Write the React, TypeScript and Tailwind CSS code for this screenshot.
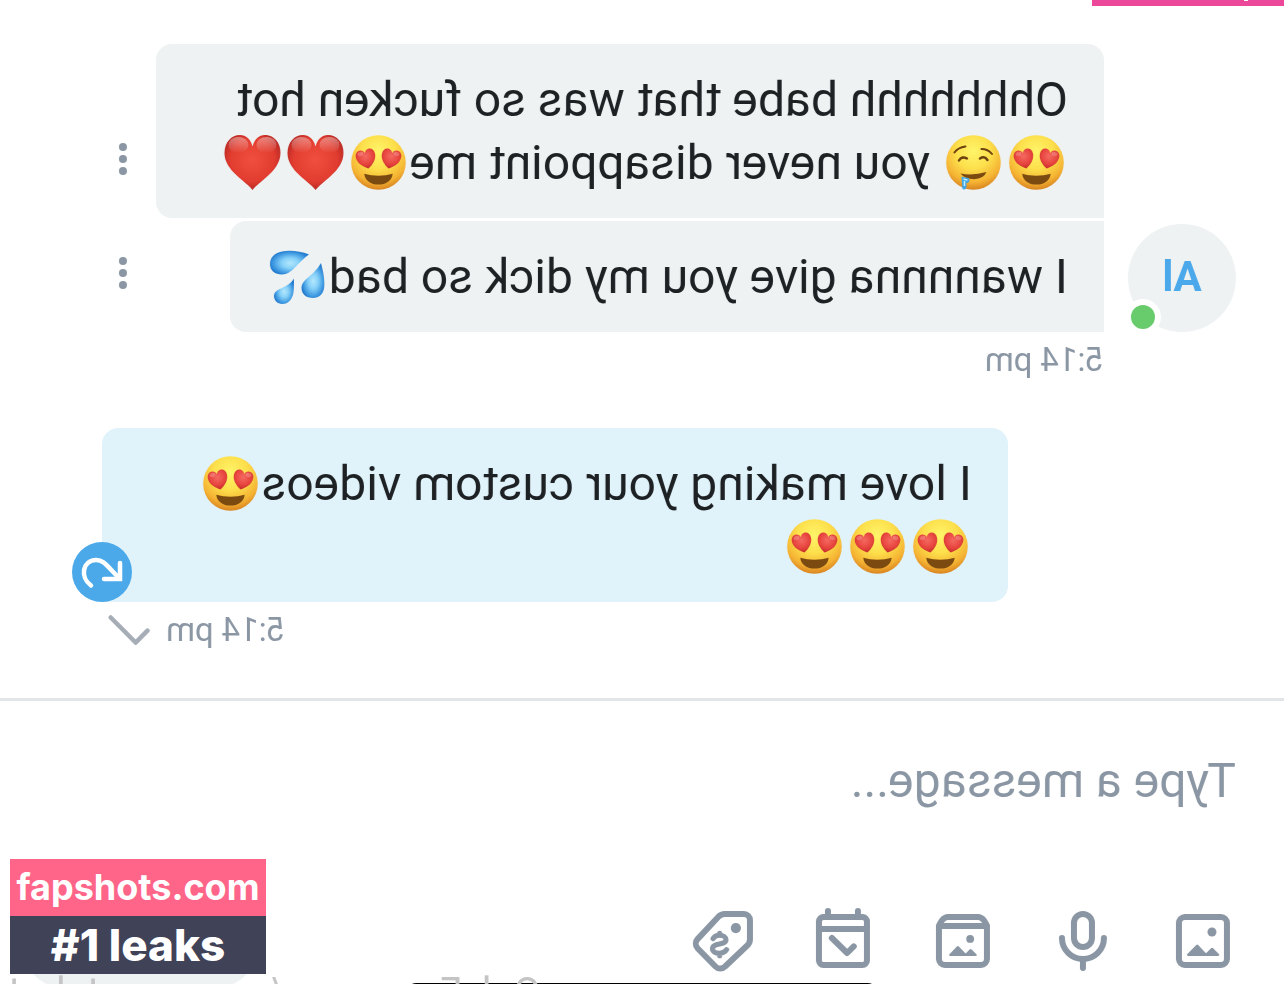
import type { ReactNode } from "react";

const HEART =
  "M0 10C-5 7-9.800 2.500-9.800-3.300C-9.800-7.600-7.200-9.400-4.800-9.400C-2.200-9.400-.6-7.800 0-5.800C.6-7.800 2.200-9.400 4.800-9.400C7.200-9.400 9.800-7.600 9.800-3.300C9.800 2.500 5 7 0 10Z";

/* Gradients shared by all the emoji drawings. */
function EmojiDefs() {
  return (
    <svg className="absolute size-0" aria-hidden="true">
      <defs>
        <radialGradient id="face" cx="0.5" cy="0.3" r="0.7">
          <stop offset="0" stopColor="#fff56a" />
          <stop offset="0.45" stopColor="#fde04c" />
          <stop offset="0.8" stopColor="#f5b333" />
          <stop offset="1" stopColor="#d98420" />
        </radialGradient>
        <radialGradient id="heart" cx="0.5" cy="0.45" r="0.6">
          <stop offset="0" stopColor="#f0503f" />
          <stop offset="0.65" stopColor="#e23d30" />
          <stop offset="1" stopColor="#ae2420" />
        </radialGradient>
        <radialGradient id="eye" cx="0.5" cy="0.35" r="0.65">
          <stop offset="0" stopColor="#f46a62" />
          <stop offset="0.6" stopColor="#e8463f" />
          <stop offset="1" stopColor="#c42c2a" />
        </radialGradient>
        <linearGradient id="gloss" x1="0" y1="0" x2="0" y2="1">
          <stop offset="0" stopColor="#fff" stopOpacity="0.4" />
          <stop offset="1" stopColor="#fff" stopOpacity="0" />
        </linearGradient>
        <radialGradient id="drop" cx="0.52" cy="0.52" r="0.55">
          <stop offset="0" stopColor="#b4e8fd" />
          <stop offset="0.4" stopColor="#86d0f8" />
          <stop offset="0.75" stopColor="#459fe4" />
          <stop offset="1" stopColor="#2178cc" />
        </radialGradient>
      </defs>
    </svg>
  );
}

function Emoji({ label, children }: { label: string; children: ReactNode }) {
  return (
    <svg
      role="img"
      aria-label={label}
      viewBox="-4 0 63 55"
      className="inline-block h-[55px] w-[63px] align-[-11px]"
    >
      {children}
    </svg>
  );
}

function HeartEyes() {
  return (
    <Emoji label="Smiling face with heart eyes">
      <circle cx="27.5" cy="27.5" r="27.3" fill="url(#face)" />
      <g transform="translate(15.2 23.8) rotate(-13)">
        <path d={HEART} fill="url(#eye)" />
        <ellipse cx="-4.500" cy="-6" rx="3" ry="2" fill="#fff" opacity="0.2" />
      </g>
      <g transform="translate(39.8 23.8) rotate(13)">
        <path d={HEART} fill="url(#eye)" />
        <ellipse cx="4.500" cy="-6" rx="3" ry="2" fill="#fff" opacity="0.2" />
      </g>
      <path d="M13.300 38.800c8.500 2.600 20 2.600 28.400 0c-.7 7.200-6.700 10.800-14.200 10.800S14 46 13.300 38.800Z" fill="#7a4a10" />
    </Emoji>
  );
}

function Drooling() {
  return (
    <Emoji label="Drooling face">
      <circle cx="27.5" cy="27.5" r="27.3" fill="url(#face)" />
      <g transform="translate(55 0) scale(-1 1)">
        <g fill="none" stroke="#6e400f" strokeWidth="2" strokeLinecap="round">
          <path d="M8.500 17.500Q12 12.500 19.500 11.500" />
          <path d="M35.500 14Q42 14 46 19" />
          <path d="M13 25.500Q16 20.500 21 23.500" strokeWidth="2.400" />
          <path d="M34 23.500Q38.500 20.500 41.500 25" strokeWidth="2.400" />
        </g>
        <path d="M14.500 38.500Q27 41 40.500 37Q38 43.800 28 44.200Q19 44 14.500 38.500Z" fill="#7a4a10" />
        <path d="M15.500 41.500C19 43 23 42 23.500 44.500C23.800 47.500 21.500 48.500 20.500 47.500V52C20.500 55 16.300 55.500 16.300 52.500Z" fill="#3ea6e8" />
        <path d="M17.500 44Q20 45 21.500 45M18.500 46V51" fill="none" stroke="#c5efff" strokeWidth="1.500" />
      </g>
    </Emoji>
  );
}

function RedHeart() {
  return (
    <Emoji label="Red heart">
      <path
        d="M27.500 55C21.500 46.500-.5 36-.5 18C-.5 7 6.500 0 15 0C21 0 25.500 4 27.500 11.500C29.500 4 34 0 40 0C48.500 0 55.500 7 55.500 18C55.500 36 33.500 46.500 27.500 55Z"
        fill="url(#heart)"
      />
      <ellipse cx="13.500" cy="10" rx="10" ry="8" fill="url(#gloss)" />
      <ellipse cx="41.500" cy="10" rx="10" ry="8" fill="url(#gloss)" />
    </Emoji>
  );
}

function SweatDrops() {
  return (
    <Emoji label="Sweat droplets">
      <g transform="translate(55 0) scale(-1 1)" fill="url(#drop)">
        <path d="M39 5.500C30 2 20 1 12 2.500C4 4 0 9 0 15C0 21.500 5 25.500 12 25.500C22 25.500 28 13 39 5.500Z" />
        <path d="M51 14C53 22 54.500 28 54.300 37C54 45 49 49 43 49C36 49 31.500 45 31.500 38.500C31.500 30 44 27 51 14Z" />
        <path d="M24 29.500C24 37 24 42 23 46C21 52 17 55 12.500 55C7 55 4 51 4 46.500C4 39 18 40 24 29.500Z" />
      </g>
    </Emoji>
  );
}

function MoreButton() {
  return (
    <button type="button" aria-label="Message options" className="mb-[27px] flex h-16 w-[66px] shrink-0 items-center justify-center text-[#8a96a3]">
      <svg viewBox="0 0 8 32" className="h-8 w-2" fill="currentColor" aria-hidden="true">
        <circle cx="4" cy="4" r="4" />
        <circle cx="4" cy="16" r="4" />
        <circle cx="4" cy="28" r="4" />
      </svg>
    </button>
  );
}

function ToolButton({ label, children }: { label: string; children: ReactNode }) {
  return (
    <button type="button" aria-label={label} className="size-[72px] shrink-0 text-[#8a96a3]">
      <svg
        viewBox="0 0 24 24"
        className="size-[72px]"
        fill="none"
        stroke="currentColor"
        strokeWidth="2"
        strokeLinecap="round"
        strokeLinejoin="round"
        aria-hidden="true"
      >
        {children}
      </svg>
    </button>
  );
}

function Toolbar() {
  return (
    <div className="flex items-center gap-12">
      <ToolButton label="Add photo">
        <rect x="4" y="4" width="16" height="16" rx="2" />
        <circle cx="9" cy="9" r="1.500" fill="currentColor" stroke="none" />
        <path d="M7 17a.4.4 0 0 1-.3-.7l1.900-1.900a.5.5 0 0 1 .7 0l1.700 1.700 2.500-2.700a.5.5 0 0 1 .8 0l2.900 2.900a.4.4 0 0 1-.3.700Z" fill="currentColor" stroke="none" />
      </ToolButton>
      <ToolButton label="Record voice">
        <rect x="9" y="3" width="6" height="11" rx="3" />
        <path d="M5 11a7 7 0 0 0 14 0M12 18v3" />
      </ToolButton>
      <ToolButton label="Add from vault">
        <path d="M4 7v11a2 2 0 0 0 2 2h12a2 2 0 0 0 2-2V7Z" />
        <path d="M4 7.500C4 6 5.500 4 7 4h10c1.500 0 3 2 3 3.500" />
        <circle cx="9.600" cy="11.300" r="1.300" fill="currentColor" stroke="none" />
        <path d="M7.700 17a.35.35 0 0 1-.2-.6l1.600-1.600a.5.5 0 0 1 .7 0l1.300 1.400 2.200-2.300a.5.5 0 0 1 .8 0l2.400 2.500a.35.35 0 0 1-.2.600Z" fill="currentColor" stroke="none" />
      </ToolButton>
      <ToolButton label="Schedule message">
        <rect x="4" y="4" width="16" height="16" rx="1.500" />
        <path d="M7 4V2M17 4V2M8.400 13.800l2.200 2.200 5.100-5" />
        <path d="M4 8h16" />
      </ToolButton>
      <ToolButton label="Set price">
        <path d="M5 3h6.400a3 3 0 0 1 2.100.9l6.900 7.400a2.300 2.300 0 0 1 0 3.200l-5.900 6a2.200 2.200 0 0 1-3.200 0L3.900 13.500A3 3 0 0 1 3 11.400V5a2 2 0 0 1 2-2Z" />
        <circle cx="7.700" cy="7.700" r="1.700" fill="currentColor" stroke="none" />
        <path
          d="M15.300 11.200c-.5-.8-1.300-1.100-2.200-1.100-1.200 0-2.100.6-2.100 1.500 0 2 4.500.8 4.500 3 0 .9-1 1.500-2.300 1.500-1 0-1.900-.4-2.400-1.200M13.100 9.400v.6M13.100 16.200v.7"
          strokeWidth="1.700"
        />
      </ToolButton>
    </div>
  );
}

export default function App() {
  return (
    <div className="relative flex h-dvh flex-col overflow-hidden bg-white font-['Roboto',sans-serif]">
      <EmojiDefs />

      <main className="relative flex min-h-0 flex-1 -scale-x-100 flex-col pt-11 text-[48px] leading-[63px] text-[#1d2124]">
        <section aria-label="Conversation" className="flex flex-col">
          <div className="flex items-end gap-6 pr-[90px] pl-12">
            <div className="relative flex size-[108px] shrink-0 items-center justify-center rounded-full bg-[#eef2f3] pb-1 text-[42px] font-bold text-[#4ba8ea]">
              Al
              <span className="absolute -right-[3px] -bottom-[3px] size-9 rounded-full border-6 border-white bg-[#68cb6c]" />
            </div>
            <div className="flex min-w-0 flex-1 flex-col gap-[3px]">
              <div className="flex items-end justify-between">
                <p className="w-full max-w-[948px] rounded-t-2xl rounded-br-2xl bg-[#eef2f3] px-9 py-6">
                  Ohhhhhhh babe that was so fucken hot
                  <HeartEyes />
                  <Drooling /> you never disappoint me
                  <HeartEyes />
                  <RedHeart />
                  <RedHeart />
                </p>
                <MoreButton />
              </div>
              <div className="flex items-end justify-between">
                <p className="rounded-r-2xl bg-[#eef2f3] px-9 py-6">
                  I wannnna give you my dick so bad
                  <SweatDrops />
                </p>
                <MoreButton />
              </div>
            </div>
          </div>
          <time className="mt-[10px] ml-[180px] text-[33px] leading-9 text-[#8a96a3]">5:14 pm</time>

          <div className="mt-[50px] flex justify-end pr-[102px]">
            <div className="relative w-full max-w-[906px] rounded-t-2xl rounded-bl-2xl bg-[#e1f3fa] px-9 py-6">
              <p>
                I love making your custom videos
                <HeartEyes />
                <br />
                <HeartEyes />
                <HeartEyes />
                <HeartEyes />
              </p>
              <button type="button" aria-label="Resend" className="absolute -right-[30px] bottom-0 size-[60px] rounded-full bg-[#4ba9ea]">
                <svg viewBox="0 0 60 60" className="size-[60px]" fill="none" stroke="#fff" strokeWidth="4.500" strokeLinecap="round" aria-hidden="true">
                  <g transform="translate(60 0) scale(-1 1)">
                    <path d="M19 43.500C7.500 35 10.500 18.500 24 18C31.500 17.800 34.500 23.500 47.500 36.500" />
                    <path d="M48 21V37H32" />
                  </g>
                </svg>
              </button>
            </div>
          </div>
          <div className="mt-[10px] flex items-center justify-end gap-4 pr-[108px] text-[#8a96a3]">
            <time className="text-[33px] leading-9">5:14 pm</time>
            <svg viewBox="0 0 42 30" className="h-[30px] w-[42px]" fill="none" stroke="#a6adb7" strokeWidth="4.500" strokeLinecap="round" role="img" aria-label="Sent">
              <path d="M2.500 15.700L14.300 27.500L39.300 2.500" />
            </svg>
          </div>
        </section>

        <form className="mt-[50px] flex flex-col border-t-3 border-[#e1e5e8] pt-12" onSubmit={(e) => e.preventDefault()}>
          <input
            type="text"
            aria-label="Message"
            placeholder="Type a message..."
            className="h-[63px] w-full px-12 outline-none placeholder:text-[#8a96a3]"
          />
          <div className="mt-[81px] flex h-24 items-center justify-between pr-5 pl-[45px]">
            <Toolbar />
            <button type="submit" aria-label="Send" className="h-24 w-60 rounded-full bg-[#eef2f3]" />
          </div>
        </form>

        <div className="absolute -bottom-[15px] left-[408px] h-4 w-[468px] rounded-full bg-black" />
        <div className="absolute -bottom-[32px] left-[743px] flex text-[40px] leading-[47px] text-[#c4c4c4]">
          <span>OnlyFans.com/</span>
          <span className="ml-[172px]">t</span>
          <span className="ml-5">l</span>
          <span className="ml-9">t</span>
        </div>
      </main>

      <div className="absolute top-0 right-0 flex h-[6px] w-48 justify-end bg-[#ec4899] pr-9">
        <span className="h-px w-1 bg-white" />
      </div>

      <aside className="absolute bottom-[10px] left-[10px] w-64 text-center font-['Inter',sans-serif] text-white">
        <p className="bg-[#ff6589] text-[36px] leading-[57px] font-bold">fapshots.com</p>
        <p className="bg-[#404258] text-[44px] leading-[58px] font-extrabold">#1 leaks</p>
      </aside>
    </div>
  );
}
